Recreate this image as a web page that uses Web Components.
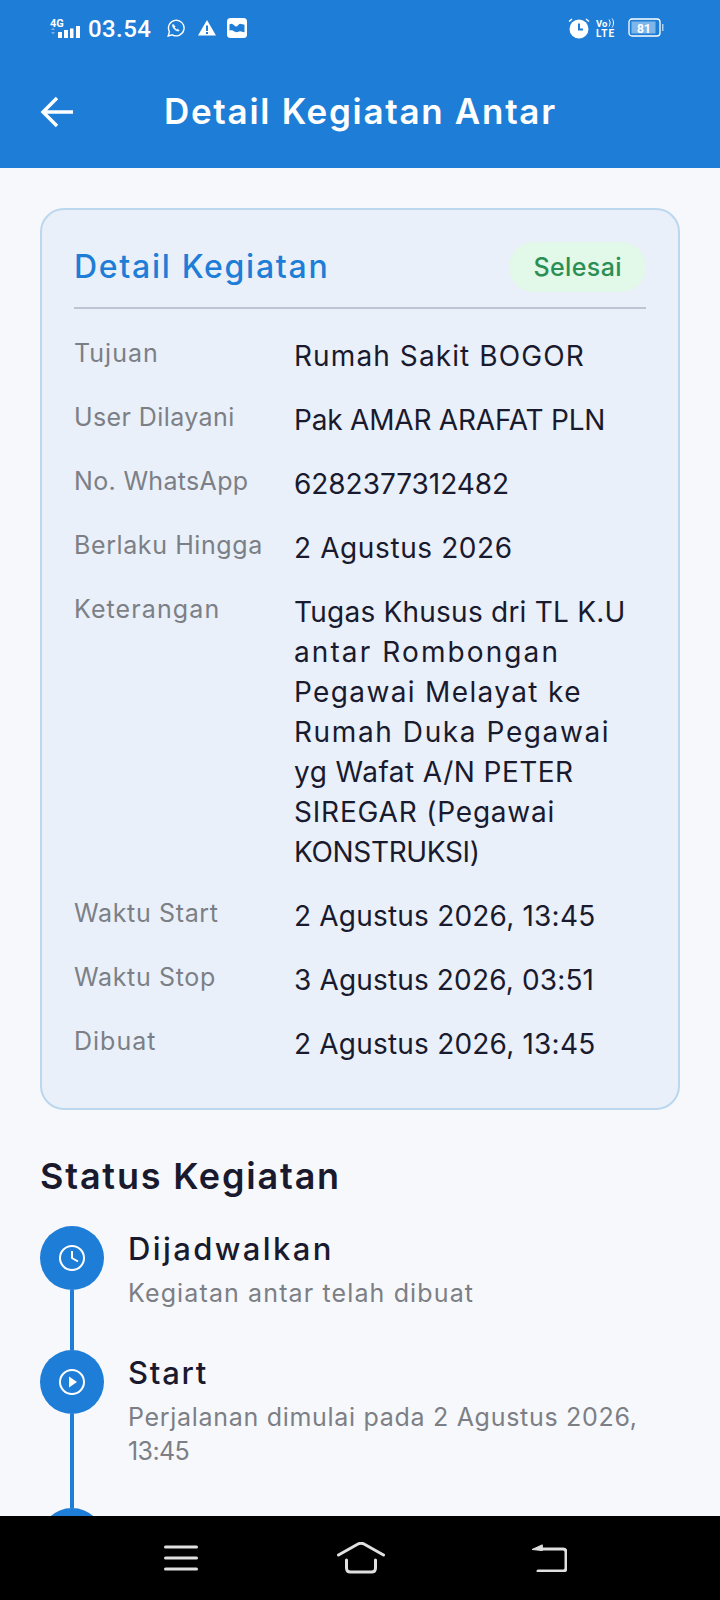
<!DOCTYPE html>
<html>
<head>
<meta charset="utf-8">
<style>
  html, body { margin: 0; padding: 0; height: 1600px; overflow: hidden; }
  body { background: #f7f8fb; font-family: Inter, "Noto Sans", sans-serif; display: flex; flex-direction: column; }
  /* Inter is narrower than the app font, so widths are tuned line by line */
  detail-row span { display: block; }
</style>
</head>
<body>
<app-header title-text="Detail Kegiatan Antar"></app-header>
<main-area>
  <detail-card heading="Detail Kegiatan" status="Selesai">
    <detail-row label="Tujuan" style="--lbl:1px;--val:1.1px">Rumah Sakit BOGOR</detail-row>
    <detail-row label="User Dilayani" style="--lbl:.4px;--val:-.2px">Pak AMAR ARAFAT PLN</detail-row>
    <detail-row label="No. WhatsApp" style="--lbl:.33px;--val:-.05px">6282377312482</detail-row>
    <detail-row label="Berlaku Hingga" style="--lbl:.6px;--val:.6px">2 Agustus 2026</detail-row>
    <detail-row label="Keterangan" style="--lbl:1.1px">
      <span style="letter-spacing:.23px">Tugas Khusus dri TL K.U</span>
      <span style="letter-spacing:2.1px">antar Rombongan</span>
      <span style="letter-spacing:1.36px">Pegawai Melayat ke</span>
      <span style="letter-spacing:1.6px">Rumah Duka Pegawai</span>
      <span style="letter-spacing:.45px">yg Wafat A/N PETER</span>
      <span style="letter-spacing:.8px">SIREGAR (Pegawai</span>
      <span style="letter-spacing:-.35px">KONSTRUKSI)</span>
    </detail-row>
    <detail-row label="Waktu Start" style="--lbl:.65px;--val:.2px">2 Agustus 2026, 13:45</detail-row>
    <detail-row label="Waktu Stop" style="--lbl:.65px;--val:.15px">3 Agustus 2026, 03:51</detail-row>
    <detail-row label="Dibuat" style="--lbl:1px;--val:.2px">2 Agustus 2026, 13:45</detail-row>
  </detail-card>
  <status-timeline heading="Status Kegiatan">
    <timeline-item icon="clock" title-text="Dijadwalkan" h="124" style="--ttl:2.4px"><span style="letter-spacing:1.13px">Kegiatan antar telah dibuat</span></timeline-item>
    <timeline-item icon="play" title-text="Start" h="158" style="--ttl:1.7px"><span style="letter-spacing:.7px">Perjalanan dimulai pada 2 Agustus 2026,</span><br><span style="letter-spacing:-.6px">13:45</span></timeline-item>
    <timeline-item icon="" h="64"></timeline-item>
  </status-timeline>
</main-area>
<nav-bar></nav-bar>

<script>
class AppHeader extends HTMLElement {
  constructor() {
    super();
    this.attachShadow({ mode: "open" });
    this.shadowRoot.innerHTML = `
      <style>
        :host { display: block; height: 168px; background: #1e7dd6; color: #fff; flex: none; }
        #status { height: 56px; display: flex; align-items: center; justify-content: space-between; padding: 0 56px 0 50px; }
        #left, #right { display: flex; align-items: center; }
        #time { font: 500 24px Roboto, sans-serif; margin: 1px 16px 0 6px; letter-spacing: .4px; }
        svg { display: block; }
        #bar { height: 112px; display: flex; align-items: center; padding-left: 40px; box-sizing: border-box; }
        #title { font: 600 35px Inter, sans-serif; margin-left: 90px; letter-spacing: 1.7px; margin-top: -2px; }
      </style>
      <div id="status">
        <div id="left">
          <svg width="32" height="22" viewBox="0 0 32 22" fill="#fff">
            <text x="0" y="10" font-family="Roboto" font-weight="700" font-size="11">4G</text>
            <path d="M1 13h4l-2-2.500zM1 15h4l-2 2.500z" fill="#78b2e8"/>
            <rect x="8" y="15" width="4" height="6"/><rect x="14" y="13" width="4" height="8"/><rect x="20" y="11.500" width="3.500" height="9.500"/><rect x="26" y="9" width="4" height="12"/>
          </svg>
          <span id="time">03.54</span>
          <svg width="18" height="18" viewBox="0 0 18 18" fill="none" stroke="#fff" stroke-width="1.400">
            <path d="M1.200 17 2.400 12.700A7.800 7.800 0 1 1 5.400 15.800z"/>
            <path d="M6 5.200c-1 1 -.5 3 1.300 4.900s3.800 2.500 4.900 1.500l-1.500-1.500-1 .6c-1-.5-1.700-1.200-2.200-2.200l.6-1z" fill="#fff" stroke-width=".6"/>
          </svg>
          <svg width="20" height="18" viewBox="0 0 20 18" style="margin-left:12px">
            <path fill="#fff" fill-rule="evenodd" d="M10 1 19 16.500H1zM9 6.500v5.500h2V6.500zM9 13v2h2v-2z"/>
          </svg>
          <svg width="20" height="20" viewBox="0 0 20 20" style="margin-left:10px">
            <rect width="20" height="20" rx="3.500" fill="#fff"/>
            <path d="M2.500 6.500c2-1.800 3.500-.5 5.500 1.500s3.500-2.300 5-2.300 3 1 4.500 1v7.500c-2 0-3-1-4.500-1s-3 1.800-5 .6-3.500-2-5.500-1z" fill="#1e7dd6"/>
          </svg>
        </div>
        <div id="right">
          <svg width="22" height="22" viewBox="0 0 22 22">
            <circle cx="11" cy="12" r="9.500" fill="#fff"/>
            <path d="M11 6.500v6h4" fill="none" stroke="#1e7dd6" stroke-width="2"/>
            <path d="M1 4.500 4 2M21 4.500 18 2" stroke="#fff" stroke-width="1.500"/>
          </svg>
          <svg width="19" height="20" viewBox="0 0 19 20" style="margin-left:6px" fill="#fff">
            <text x="0" y="9" font-family="Roboto" font-weight="700" font-size="9.500">Vo</text>
            <path d="M13 1.500c1.500 2 1.500 5 0 7M16 .5c2 2.500 2 6.500 0 9" fill="none" stroke="#fff" stroke-width="1"/>
            <text x="0" y="19" font-family="Roboto" font-weight="700" font-size="10" textLength="18">LTE</text>
          </svg>
          <svg width="36" height="20" viewBox="0 0 36 20" style="margin-left:13px">
            <rect x="1" y="1" width="31" height="17" rx="3" fill="none" stroke="#fff" stroke-width="1.300"/>
            <rect x="3.500" y="3.500" width="24" height="12" fill="#7fb6ea"/>
            <rect x="34" y="6" width="1.500" height="7" fill="#a9cff2"/>
            <text x="9" y="14.500" font-family="Roboto" font-weight="700" font-size="12" fill="#fff">81</text>
          </svg>
        </div>
      </div>
      <div id="bar">
        <svg width="34" height="32" viewBox="0 0 34 32" fill="none" stroke="#fff" stroke-width="3.400">
          <path d="M33 16H3M17 2 3 16l14 14"/>
        </svg>
        <span id="title"></span>
      </div>`;
    this.shadowRoot.querySelector("#title").textContent = this.getAttribute("title-text");
  }
}

class MainArea extends HTMLElement {
  constructor() {
    super();
    this.attachShadow({ mode: "open" });
    this.shadowRoot.innerHTML = `
      <style>
        :host { display: block; flex: 1; min-height: 0; overflow: hidden; padding: 40px 40px 0; color: #1a1a2e; }
      </style>
      <slot></slot>`;
  }
}

class DetailCard extends HTMLElement {
  constructor() {
    super();
    this.attachShadow({ mode: "open" });
    this.shadowRoot.innerHTML = `
      <style>
        :host { display: block; box-sizing: border-box; height: 902px; background: #e9f0fa; border: 2px solid #bbd7ee; border-radius: 24px; padding: 32px 32px 0; }
        header { display: flex; justify-content: space-between; align-items: flex-start; height: 65px; border-bottom: 2px solid #c0c4d2; margin-bottom: 27px; }
        h2 { margin: 1px 0 0; font: 500 32px/48px Inter, sans-serif; color: #1e7dd6; letter-spacing: 1.7px; }
        #badge { background: #e2f8e8; color: #2a8f55; font: 500 25px Inter, sans-serif; height: 50px; line-height: 50px; padding: 0 24px; border-radius: 25px; letter-spacing: .4px; }
      </style>
      <header><h2></h2><span id="badge"></span></header>
      <slot></slot>`;
    this.shadowRoot.querySelector("h2").textContent = this.getAttribute("heading");
    this.shadowRoot.querySelector("#badge").textContent = this.getAttribute("status");
  }
}

class DetailRow extends HTMLElement {
  constructor() {
    super();
    this.attachShadow({ mode: "open" });
    this.shadowRoot.innerHTML = `
      <style>
        :host { display: grid; grid-template-columns: 220px 1fr; padding-bottom: 24px; }
        #label { font: 400 25px/40px Inter, sans-serif; color: #7c7f85; margin-top: -3px; letter-spacing: var(--lbl, 0); }
        #value { font: 400 28px/40px Inter, sans-serif; color: #1a1a2e; letter-spacing: var(--val, 0); }
      </style>
      <div id="label"></div>
      <div id="value"><slot></slot></div>`;
    this.shadowRoot.querySelector("#label").textContent = this.getAttribute("label");
  }
}

class StatusTimeline extends HTMLElement {
  constructor() {
    super();
    this.attachShadow({ mode: "open" });
    this.shadowRoot.innerHTML = `
      <style>
        :host { display: block; }
        h3 { margin: 42px 0 26px; font: 600 36px/48px Inter, sans-serif; color: #1a1a2e; letter-spacing: 1.8px; }
      </style>
      <h3></h3>
      <slot></slot>`;
    this.shadowRoot.querySelector("h3").textContent = this.getAttribute("heading");
  }
}

const timelineIcons = {
  clock: `<circle cx="13" cy="13" r="12"/><path d="M13 6v7l6 3.500"/>`,
  play: `<circle cx="13" cy="13" r="12"/><path d="M10 7.500 18 13l-8 5.500z" fill="#fff" stroke="none"/>`,
};

class TimelineItem extends HTMLElement {
  constructor() {
    super();
    this.attachShadow({ mode: "open" });
    const icon = timelineIcons[this.getAttribute("icon")] || "";
    const title = this.getAttribute("title-text");
    this.shadowRoot.innerHTML = `
      <style>
        :host { display: flex; gap: 24px; height: ${this.getAttribute("h")}px; }
        #rail { width: 64px; flex: none; display: flex; flex-direction: column; align-items: center; }
        #dot { width: 64px; height: 64px; flex: none; border-radius: 50%; background: #1e7dd6; display: flex; align-items: center; justify-content: center; }
        #line { width: 4px; flex: 1; background: #1e7dd6; }
        h4 { margin: 1px 0 0; font: 500 31px/44px Inter, sans-serif; color: #1a1a2e; letter-spacing: var(--ttl, 0); }
        p { margin: 5px 0 0; font: 400 25px/34px Inter, sans-serif; color: #7c7f85; }
      </style>
      <div id="rail">
        <div id="dot"><svg width="26" height="26" viewBox="0 0 26 26" fill="none" stroke="#fff" stroke-width="2">${icon}</svg></div>
        <div id="line"></div>
      </div>
      ${title ? `<div><h4>${title}</h4><p><slot></slot></p></div>` : ""}`;
  }
}

class NavBar extends HTMLElement {
  constructor() {
    super();
    this.attachShadow({ mode: "open" });
    this.shadowRoot.innerHTML = `
      <style>
        :host { display: flex; flex: none; height: 84px; background: #000; align-items: center; justify-content: space-between; padding: 0 153px 0 164px; box-sizing: border-box; }
        svg { display: block; fill: none; stroke: #e0e0e0; stroke-width: 3; stroke-linecap: round; stroke-linejoin: round; }
        #home { margin-right: 8px; }
      </style>
      <svg width="34" height="26" viewBox="0 0 34 26"><path d="M1.500 2h31M1.500 13h31M1.500 24h31"/></svg>
      <svg id="home" width="48" height="32" viewBox="0 0 48 32"><path d="M1.500 13 21 2q3-1.500 6 0l19.500 11M9.500 18v8q0 4 4 4h21q4 0 4-4v-8"/></svg>
      <svg width="36" height="28" viewBox="0 0 36 28"><path d="M7 27h25q3 0 3-3V8q0-3-3-3H10"/><path d="M11 1 1 5.500 11 6.500z" fill="#e0e0e0" stroke-width="1"/></svg>`;
  }
}

customElements.define("app-header", AppHeader);
customElements.define("main-area", MainArea);
customElements.define("detail-card", DetailCard);
customElements.define("detail-row", DetailRow);
customElements.define("status-timeline", StatusTimeline);
customElements.define("timeline-item", TimelineItem);
customElements.define("nav-bar", NavBar);
</script>
</body>
</html>
